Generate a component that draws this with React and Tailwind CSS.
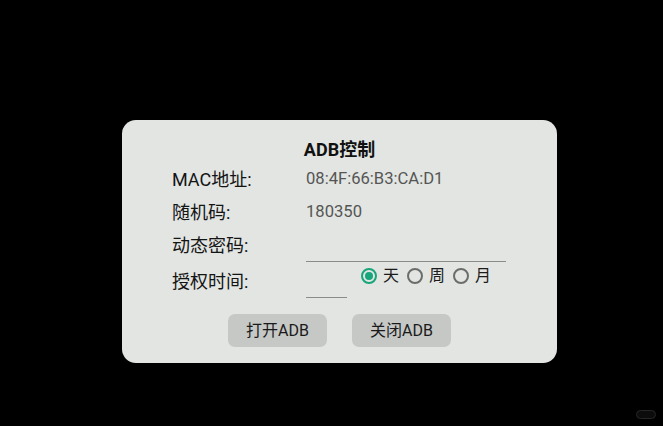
import React, { useState } from 'react';

const font = { fontFamily: 'Roboto, "Noto Sans CJK SC", sans-serif' };

const Radio = ({ checked, label, onClick }) => (
  <button onClick={onClick} className="flex items-center gap-[6px] mr-[8px]">
    {checked ? (
      <span className="w-[16px] h-[16px] rounded-full border-2 border-[#17a57c] flex items-center justify-center">
        <span className="w-[8px] h-[8px] rounded-full bg-[#17a57c]" />
      </span>
    ) : (
      <span className="w-[16px] h-[16px] rounded-full border-2 border-[#6b6d6b]" />
    )}
    <span className="text-[16px] leading-[20px] text-[#1c1c1c]">{label}</span>
  </button>
);

const App = () => {
  const [period, setPeriod] = useState('day');

  return (
    <div className="w-[663px] h-[426px] bg-black relative overflow-hidden" style={font}>
      <div className="pt-[120px] pl-[122px]">
        <div className="w-[435px] h-[243px] bg-[#e2e5e2] rounded-[14px] flex flex-col">
          <h1 className="mt-[18px] h-[24px] leading-[24px] text-center text-[18px] font-bold text-[#111]">
            ADB控制
          </h1>

          <div className="pl-[50px] text-[18px] text-[#141414]">
            <div className="flex items-center h-[34px]">
              <span className="w-[134px]">MAC地址:</span>
              <span className="text-[16.6px] text-[#555]">08:4F:66:B3:CA:D1</span>
            </div>
            <div className="flex items-center h-[33px]">
              <span className="w-[134px]">随机码:</span>
              <span className="text-[16.6px] text-[#555]">180350</span>
            </div>
            <div className="flex items-center h-[33px]">
              <span className="w-[134px]">动态密码:</span>
              <input className="w-[200px] h-[33px] self-end bg-transparent border-b border-[#8a8c8a] outline-none text-[#555]" />
            </div>
            <div className="flex h-[36px]">
              <span className="w-[134px] self-center pt-[2px]">授权时间:</span>
              <input className="w-[41px] h-[20px] self-end bg-transparent border-b border-[#8a8c8a] outline-none" />
              <div className="flex items-center h-[28px] ml-[14px]">
                <Radio checked={period === 'day'} label="天" onClick={() => setPeriod('day')} />
                <Radio checked={period === 'week'} label="周" onClick={() => setPeriod('week')} />
                <Radio checked={period === 'month'} label="月" onClick={() => setPeriod('month')} />
              </div>
            </div>
          </div>

          <div className="flex justify-center gap-[25px] mt-[16px]">
            <button className="w-[99px] h-[33px] rounded-[7px] bg-[#c6c8c6] text-[16px] text-[#1a1a1a]">
              打开ADB
            </button>
            <button className="w-[99px] h-[33px] rounded-[7px] bg-[#c6c8c6] text-[16px] text-[#1a1a1a]">
              关闭ADB
            </button>
          </div>
        </div>
      </div>

      {/* watermark pill */}
      <div className="absolute left-[636px] top-[410px] w-[20px] h-[9px] rounded-full border border-[#262626] bg-[#0c0c0c]" />
    </div>
  );
};

export default App;
